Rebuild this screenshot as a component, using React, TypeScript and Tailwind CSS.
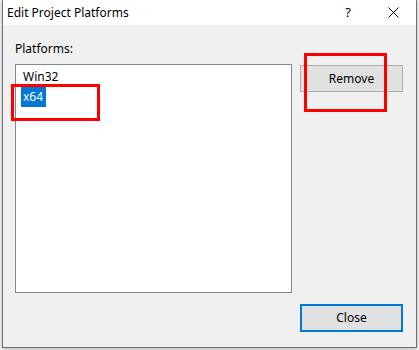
export default function App() {
  return (
    <div className="relative w-[419px] h-[350px] bg-[#f2f2f2] overflow-hidden font-['Noto_Sans',_'Open_Sans',_sans-serif] text-[12px] text-black">
      {/* Dialog window */}
      <div className="ml-[2px] w-[415px] h-[348px] flex flex-col border-x border-b border-[#707070] bg-[#f0f0f0] shadow-[0_1px_3px_rgba(0,0,0,0.25)]">
        {/* Title bar */}
        <div className="h-[25px] bg-white flex items-center pl-[4px] pr-[17px]">
          <span className="leading-none">Edit Project Platforms</span>
          <span className="ml-auto leading-none text-[13px]">?</span>
          <svg className="ml-[37px]" width="11" height="11" viewBox="0 0 11 11">
            <path d="M0.5 0.5 L10.5 10.5 M10.5 0.5 L0.5 10.5" stroke="#000" strokeWidth="1" fill="none" />
          </svg>
        </div>

        {/* Body */}
        <div className="flex-1 flex gap-[8px] pt-[16px] pl-[12px] pr-[12px] pb-[15px]">
          <div className="flex flex-col w-[277px]">
            <div className="h-[16px] leading-[16px]">Platforms:</div>
            <div className="mt-[7px] h-[229px] bg-white border border-[#828790] pt-[2px] pl-[5px]">
              <div className="h-[20px] leading-[20px] px-[2px]">Win32</div>
              <div className="h-[20px]">
                <span className="inline-block h-[20px] leading-[20px] px-[2px] pr-[3px] bg-[#0078d7] text-white">x64</span>
              </div>
            </div>
          </div>

          <div className="flex flex-col w-[103px] pt-[24px]">
            <button className="h-[27px] bg-[#e1e1e1] border border-[#adadad]">Remove</button>
            <button className="mt-auto h-[28px] bg-[#e1e1e1] border-2 border-[#0078d7]">Close</button>
          </div>
        </div>
      </div>

      {/* Red annotation boxes */}
      <div className="absolute left-[11px] top-[84px] w-[89px] h-[37px] border-[3px] border-[#ff0000]" />
      <div className="absolute left-[304px] top-[53px] w-[83px] h-[59px] border-[3px] border-[#ff0000]" />
    </div>
  );
}
